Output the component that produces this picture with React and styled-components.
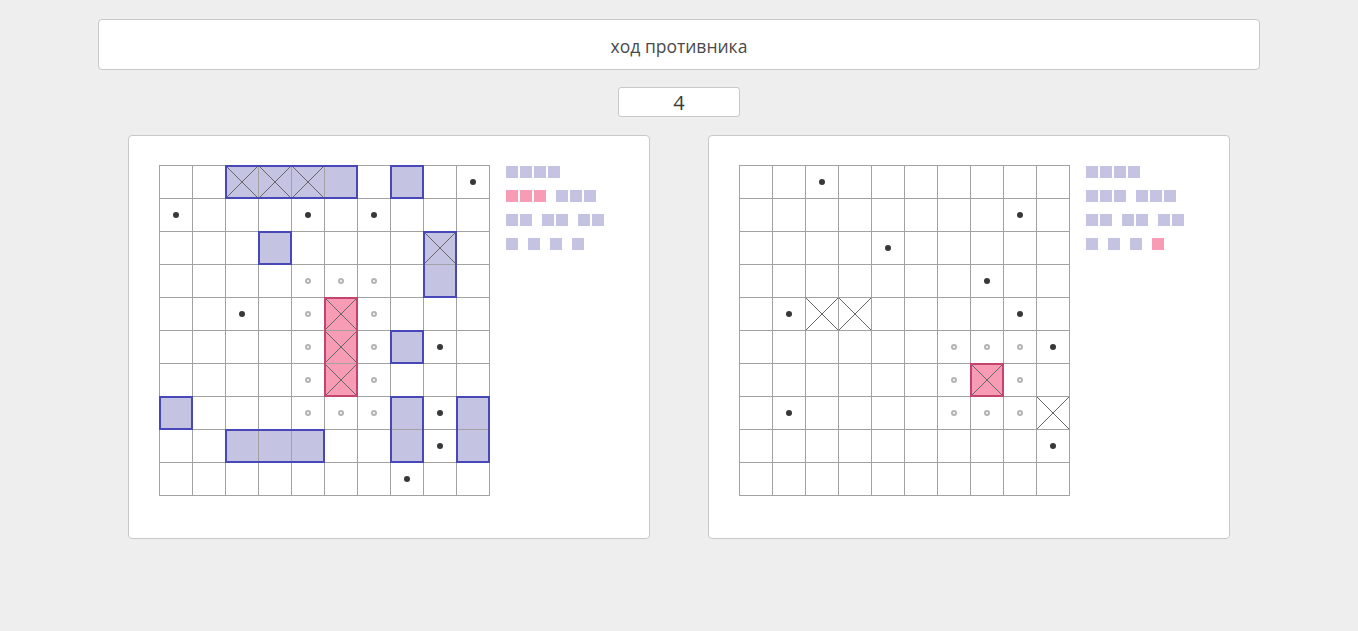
import React from "react";
import styled, { createGlobalStyle } from "styled-components";

const GlobalStyle = createGlobalStyle`
  body {
    margin: 0;
    background-color: #eeeeee;
    font-family: "Open Sans", "Liberation Sans", sans-serif;
  }
`

const Page = styled.div`
  display: flex;
  flex-direction: column;
  align-items: center;
  padding-top: 19px;
`
const StatusBar = styled.div`
  box-sizing: border-box;
  width: 1162px;
  height: 51px;
  background-color: #fff;
  border: 1px solid #c8c8c8;
  border-radius: 4px;
  display: flex;
  align-items: center;
  justify-content: center;
  font-size: 17.5px;
  color: #4a4a4a;
  padding-top: 2px;
`
const Counter = styled.div`
  box-sizing: border-box;
  width: 122px;
  height: 30px;
  margin-top: 17px;
  background-color: #fff;
  border: 1px solid #c8c8c8;
  border-radius: 3px;
  display: flex;
  align-items: center;
  justify-content: center;
  font-size: 20px;
  color: #3a3a3a;
`
const Boards = styled.div`
  display: flex;
  gap: 58px;
  margin-top: 18px;
`
const Panel = styled.div`
  box-sizing: border-box;
  width: 522px;
  height: 404px;
  background-color: #fff;
  border: 1px solid #c8c8c8;
  border-radius: 4px;
  padding: 29px 0 0 30px;
  display: flex;
  align-items: flex-start;
  gap: 16px;
`
const Board = styled.div`
  position: relative;
  display: grid;
  grid-template-columns: repeat(10, 33px);
  grid-auto-rows: 33px;
  border-left: 1px solid #a2a2a2;
  border-top: 1px solid #a2a2a2;
`
const Cell = styled.div`
  box-sizing: border-box;
  border-right: 1px solid #a2a2a2;
  border-bottom: 1px solid #a2a2a2;
  background-color: ${p => p.$fill === 'ship' ? '#c4c3e1' : p.$fill === 'sunk' ? '#f89bb4' : '#fff'};
  display: flex;
  align-items: center;
  justify-content: center;
`
const Dot = styled.span`
  width: 6px;
  height: 6px;
  border-radius: 50%;
  background-color: #383838;
`
const Ring = styled.span`
  box-sizing: border-box;
  width: 6px;
  height: 6px;
  border-radius: 50%;
  border: 2px solid #b4b4b4;
`
const Cross = styled.svg`
  width: 32px;
  height: 32px;
  display: block;
`
const ShipOutline = styled.div`
  position: absolute;
  box-sizing: border-box;
  border: 2px solid ${p => p.$sunk ? '#c2446f' : '#4848b8'};
  pointer-events: none;
`
const Legend = styled.div`
  display: flex;
  flex-direction: column;
  gap: 12px;
  padding-top: 1px;
`
const LegendRow = styled.div`
  display: flex;
  gap: 10px;
`
const LegendShip = styled.div`
  display: flex;
  gap: 2px;
`
const LegendDeck = styled.span`
  width: 12px;
  height: 12px;
  background-color: ${p => p.$sunk ? '#f89bb4' : '#c4c3e1'};
`

const myBoard = [
  "..hhhs.s.m",
  "m...m.m...",
  "...s....h.",
  "....ooo.s.",
  "..m.oko...",
  "....okosm.",
  "....oko...",
  "s...ooosms",
  "..sss..sms",
  ".......m..",
]
const myShips = [
  { r: 0, c: 2, w: 4, h: 1 },
  { r: 0, c: 7, w: 1, h: 1 },
  { r: 2, c: 3, w: 1, h: 1 },
  { r: 2, c: 8, w: 1, h: 2 },
  { r: 4, c: 5, w: 1, h: 3, sunk: true },
  { r: 5, c: 7, w: 1, h: 1 },
  { r: 7, c: 0, w: 1, h: 1 },
  { r: 7, c: 7, w: 1, h: 2 },
  { r: 7, c: 9, w: 1, h: 2 },
  { r: 8, c: 2, w: 3, h: 1 },
]
const enemyBoard = [
  "..m.......",
  "........m.",
  "....m.....",
  ".......m..",
  ".mxx....m.",
  "......ooom",
  "......oko.",
  ".m....ooox",
  ".........m",
  "..........",
]
const enemyShips = [
  { r: 6, c: 7, w: 1, h: 1, sunk: true },
]

const myFleet = [
  [[4, false]],
  [[3, true], [3, false]],
  [[2, false], [2, false], [2, false]],
  [[1, false], [1, false], [1, false], [1, false]],
]
const enemyFleet = [
  [[4, false]],
  [[3, false], [3, false]],
  [[2, false], [2, false], [2, false]],
  [[1, false], [1, false], [1, false], [1, true]],
]

const X = () => (
  <Cross viewBox="0 0 32 32">
    <line x1="0" y1="0" x2="32" y2="32" stroke="#666" strokeWidth="1" />
    <line x1="32" y1="0" x2="0" y2="32" stroke="#666" strokeWidth="1" />
  </Cross>
)

const renderCell = (ch, key) => {
  if (ch === 's') return <Cell key={key} $fill="ship" />
  if (ch === 'h') return <Cell key={key} $fill="ship"><X /></Cell>
  if (ch === 'k') return <Cell key={key} $fill="sunk"><X /></Cell>
  if (ch === 'x') return <Cell key={key}><X /></Cell>
  if (ch === 'm') return <Cell key={key}><Dot /></Cell>
  if (ch === 'o') return <Cell key={key}><Ring /></Cell>
  return <Cell key={key} />
}

const Field = ({ rows, ships, fleet }) => (
  <Panel>
    <Board>
      {rows.map((row, r) => row.split('').map((ch, c) => renderCell(ch, r + '-' + c)))}
      {ships.map((s, i) => (
        <ShipOutline
          key={i}
          $sunk={s.sunk}
          style={{ left: s.c * 33 - 1, top: s.r * 33 - 1, width: s.w * 33 + 1, height: s.h * 33 + 1 }}
        />
      ))}
    </Board>
    <Legend>
      {fleet.map((line, i) => (
        <LegendRow key={i}>
          {line.map(([size, sunk], j) => (
            <LegendShip key={j}>
              {Array.from({ length: size }).map((_, k) => <LegendDeck key={k} $sunk={sunk} />)}
            </LegendShip>
          ))}
        </LegendRow>
      ))}
    </Legend>
  </Panel>
)

const App = () => {
  return (
    <>
      <GlobalStyle />
      <Page>
        <StatusBar>ход противника</StatusBar>
        <Counter>4</Counter>
        <Boards>
          <Field rows={myBoard} ships={myShips} fleet={myFleet} />
          <Field rows={enemyBoard} ships={enemyShips} fleet={enemyFleet} />
        </Boards>
      </Page>
    </>
  )
}

export default App
